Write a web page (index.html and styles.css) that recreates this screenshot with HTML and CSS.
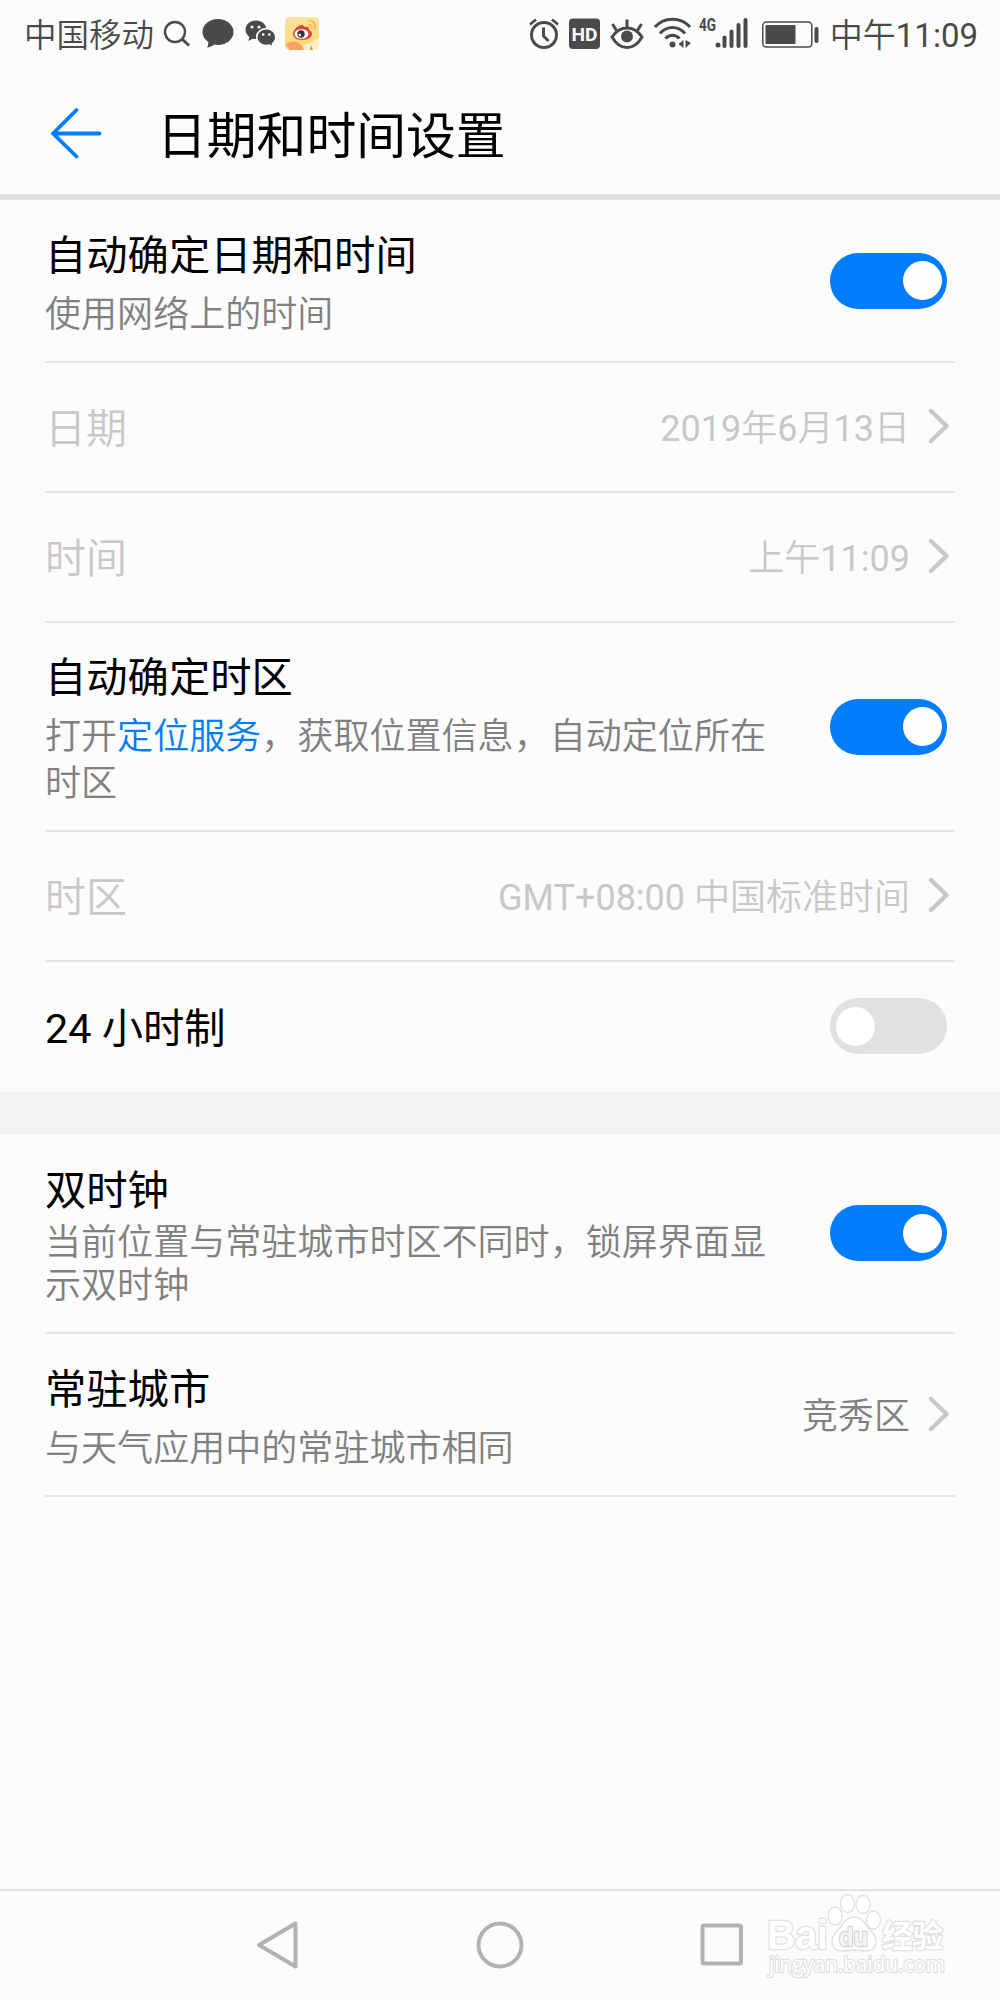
FILE: index.html
```html
<!DOCTYPE html>
<html lang="zh-CN">
<head>
    <meta charset="UTF-8">
    <title>日期和时间设置</title>
    <link rel="stylesheet" href="styles.css">
</head>
<body>
    <div class="status-bar">
        <span class="carrier">中国移动</span>
        <div class="status-left">
            <svg width="28" height="40" viewBox="0 0 28 40" fill="none" stroke="#4a4a4a" stroke-width="2.4">
                <circle cx="12" cy="18" r="10"/>
                <path d="M19 25l7 6.500" stroke-width="3"/>
            </svg>
            <svg width="32" height="40" viewBox="0 0 32 40" fill="#4a4a4a">
                <path d="M16 5C7.500 5 .5 10.500 .5 18c0 4.300 2.200 7.800 5.800 10 .2 2.200-.4 4.200-1.300 5.600 2.800-.2 5.300-1.400 7.200-3.100 1.200.3 2.500.4 3.800.4 8.600 0 15.500-5.600 15.500-12.900S24.600 5 16 5z"/>
            </svg>
            <svg width="31" height="40" viewBox="0 0 31 40">
                <path fill="#4a4a4a" d="M11 6.500C5 6.500.5 10.700.5 15.800c0 3 1.500 5.500 4 7.200L3.300 27l4.500-2.300c1.100.3 2.100.4 3.200.4 6 0 10.500-4.100 10.500-9.300S17 6.500 11 6.500z"/>
                <path fill="#4a4a4a" stroke="#fcfcfc" stroke-width="1.600" d="M21.300 14.600c-5.300 0-9.600 3.700-9.600 8.500s4.300 8.500 9.600 8.500c1.100 0 2.100-.2 3.100-.5l4 2.300-1-3.600c2.200-1.600 3.400-4 3.400-6.700 0-4.800-4.200-8.500-9.500-8.500z"/>
                <g fill="#fcfcfc">
                    <circle cx="7" cy="13" r="1.500"/>
                    <circle cx="14" cy="13" r="1.500"/>
                    <circle cx="18.200" cy="20.500" r="1.300"/>
                    <circle cx="24.300" cy="20.500" r="1.300"/>
                </g>
            </svg>
            <svg class="weibo" width="34" height="40" viewBox="0 0 34 40">
                <defs>
                    <linearGradient id="weiboBg" x1="0" y1="0" x2="0" y2="1">
                        <stop offset="0" stop-color="#fbe3a0"/>
                        <stop offset="1" stop-color="#fbd76a"/>
                    </linearGradient>
                    <clipPath id="weiboClip"><rect y="3" width="34" height="33" rx="5"/></clipPath>
                </defs>
                <g clip-path="url(#weiboClip)">
                    <rect y="3" width="34" height="33" fill="url(#weiboBg)"/>
                    <path d="M1 31c5-5 11-4 15 0l3 5H5z" fill="#f7a06a"/>
                    <path d="M18 32c5-5 9-1 11-6l5-2v12H19z" fill="#fdeec9"/>
                    <path d="M25 36l1-5 2 5z" fill="#f58a4a"/>
                </g>
                <path d="M8 20c0-4 5-9 9-9 2 0 2 1 2 2 3-1 6 0 5 3 3 1 3 3 3 4 0 3-4 6-10 6S8 23 8 20z" fill="#e0453c"/>
                <ellipse cx="16.500" cy="20" rx="7" ry="4.800" fill="#fff"/>
                <circle cx="16" cy="20" r="3.700" fill="#37343a"/>
                <circle cx="14.800" cy="21" r="1.200" fill="#fff"/>
                <path d="M23 10.500c3 0 4.500 2 4 4.500M23.500 6.500c5 0 7.500 4 6.500 9" fill="none" stroke="#f5bb5a" stroke-width="1.800"/>
            </svg>
        </div>
        <div class="status-right">
            <svg width="30" height="40" viewBox="0 0 30 40" fill="none" stroke="#4a4a4a" stroke-width="3">
                <circle cx="15" cy="21" r="12.500"/>
                <path d="M14.500 13.500V22l5 5"/>
                <path d="M1 10.500L7 5.500M23 5.500l6 5" stroke-width="2.600"/>
            </svg>
            <svg width="31" height="40" viewBox="0 0 31 40">
                <rect y="4.500" width="31" height="30.500" rx="4" fill="#4a4a4a"/>
                <text class="hd-text" x="15.500" y="26.500" text-anchor="middle" textLength="26" lengthAdjust="spacingAndGlyphs">HD</text>
            </svg>
            <svg width="34" height="40" viewBox="0 0 34 40" fill="none" stroke="#4a4a4a" stroke-width="3">
                <path d="M2 23c4-6 9-9 15-9s11 3 15 9c-4 7-9 10.500-15 10.500S6 30 2 23z"/>
                <circle cx="17" cy="22.500" r="6" fill="#4a4a4a" stroke="none"/>
                <path d="M17 5.500V14M2.500 10l4 6.500M31.500 10l-4 6.500"/>
            </svg>
            <svg width="37" height="40" viewBox="0 0 37 40" fill="none" stroke="#4a4a4a" stroke-width="3">
                <path d="M1 13c9-10.500 26-10.500 35 0M6 19.500c7-8 18-8 25 0M11.500 24.500c4-4.200 10-4.200 14 0"/>
                <circle cx="18.500" cy="30.500" r="3" fill="#4a4a4a" stroke="none"/>
                <path d="M29.500 26v8l-5-4zM31.500 26v8l5.500-5z" fill="#4a4a4a" stroke="none"/>
            </svg>
            <svg class="signal" width="50" height="40" viewBox="0 0 50 40" fill="#4a4a4a">
                <text class="net-text" x="0" y="17" textLength="17" lengthAdjust="spacingAndGlyphs">4G</text>
                <circle cx="19" cy="31" r="2.500"/>
                <rect x="23.500" y="21.500" width="4" height="12.500" rx="2"/>
                <rect x="30.500" y="15.500" width="4" height="18.500" rx="2"/>
                <rect x="37.500" y="9" width="4" height="25" rx="2"/>
                <rect x="44.500" y="4" width="4" height="30" rx="2"/>
            </svg>
            <svg width="57" height="40" viewBox="0 0 57 40">
                <rect x=".8" y="8" width="49" height="25" rx="3.500" fill="none" stroke="#4a4a4a" stroke-width="1.500"/>
                <rect x="3.500" y="11" width="30" height="19" rx="1" fill="#4a4a4a"/>
                <rect x="52.500" y="13" width="4" height="16" rx="2" fill="#4a4a4a"/>
            </svg>
            <span class="clock">中午<span class="num">11:09</span></span>
        </div>
    </div>

    <div class="header">
        <svg width="52" height="52" viewBox="0 0 52 52" fill="none" stroke="#007dff" stroke-width="3.800" stroke-linecap="round" stroke-linejoin="round">
            <path d="M26.500 3L3 26.500l23.500 23M3 26.500h46.500"/>
        </svg>
        <h1>日期和时间设置</h1>
    </div>

    <div class="row row-tall">
        <div class="row-text">
            <div class="row-title">自动确定日期和时间</div>
            <div class="row-desc">使用网络上的时间</div>
        </div>
        <div class="switch on"></div>
    </div>
    <div class="row disabled">
        <div class="row-text"><div class="row-title">日期</div></div>
        <span class="row-value"><span class="num">2019</span>年<span class="num">6</span>月<span class="num">13</span>日</span>
        <svg class="chevron" viewBox="0 0 22 36"><path d="M3 3l15.500 15L3 33"/></svg>
    </div>
    <div class="row disabled">
        <div class="row-text"><div class="row-title">时间</div></div>
        <span class="row-value">上午<span class="num">11:09</span></span>
        <svg class="chevron" viewBox="0 0 22 36"><path d="M3 3l15.500 15L3 33"/></svg>
    </div>
    <div class="row row-zone">
        <div class="row-text">
            <div class="row-title">自动确定时区</div>
            <div class="row-desc">打开<a class="link">定位服务</a>，获取位置信息，自动定位所在时区</div>
        </div>
        <div class="switch on"></div>
    </div>
    <div class="row disabled">
        <div class="row-text"><div class="row-title">时区</div></div>
        <span class="row-value"><span class="num">GMT+08:00 </span>中国标准时间</span>
        <svg class="chevron" viewBox="0 0 22 36"><path d="M3 3l15.500 15L3 33"/></svg>
    </div>
    <div class="row last">
        <div class="row-text"><div class="row-title">24 小时制</div></div>
        <div class="switch"></div>
    </div>

    <div class="section-gap"></div>

    <div class="row row-dual">
        <div class="row-text">
            <div class="row-title">双时钟</div>
            <div class="row-desc">当前位置与常驻城市时区不同时，锁屏界面显示双时钟</div>
        </div>
        <div class="switch on"></div>
    </div>
    <div class="row row-city">
        <div class="row-text">
            <div class="row-title">常驻城市</div>
            <div class="row-desc">与天气应用中的常驻城市相同</div>
        </div>
        <span class="row-value">竞秀区</span>
        <svg class="chevron" viewBox="0 0 22 36"><path d="M3 3l15.500 15L3 33"/></svg>
    </div>

    <div class="nav-bar">
        <svg width="48" height="50" viewBox="0 0 48 50"><path d="M41.500 3.500v43L5 25z"/></svg>
        <svg width="48" height="50" viewBox="0 0 48 50"><circle cx="24" cy="25" r="21.500"/></svg>
        <svg width="48" height="50" viewBox="0 0 48 50"><rect x="4.500" y="5.500" width="38.500" height="38" rx="1.500"/></svg>

        <svg class="watermark" width="190" height="90" viewBox="0 0 190 90">
            <text class="wm-logo" x="4" y="56" textLength="61" lengthAdjust="spacingAndGlyphs">Bai</text>
            <ellipse cx="72" cy="23" rx="7" ry="9"/>
            <ellipse cx="84.500" cy="10.500" rx="7" ry="9"/>
            <ellipse cx="100" cy="11.500" rx="7" ry="9"/>
            <ellipse cx="110.500" cy="27" rx="7" ry="9"/>
            <path d="M91 24c9 0 11 8 17 14 8 8 6 20-5 20-4 0-8-1-12-1s-8 1-12 1c-11 0-13-12-5-20 6-6 8-14 17-14z"/>
            <text class="wm-du" x="76" y="53" textLength="29" lengthAdjust="spacingAndGlyphs">du</text>
            <text class="wm-cn" x="119" y="54" textLength="61" lengthAdjust="spacingAndGlyphs">经验</text>
            <text class="wm-url" x="6" y="79" textLength="176" lengthAdjust="spacingAndGlyphs">jingyan.baidu.com</text>
        </svg>
    </div>
</body>
</html>
```
FILE: styles.css
```css
*, *::before, *::after {
    box-sizing: border-box;
}

body {
    display: flex;
    flex-direction: column;
    width: 1000px;
    height: 2000px;
    margin: 0;
    background: #fcfcfc;
    color: #000;
    font-family: Roboto, "Noto Sans CJK SC", sans-serif;
    overflow: hidden;
}
svg {
    display: block;
    flex: none;
}
.num {
    font-weight: 400;
}

/* status bar */
.status-bar {
    display: flex;
    align-items: center;
    height: 68px;
    padding: 0 22px 0 24px;
    color: #4a4a4a;
    font-size: 33px;
    font-weight: 350;
    line-height: 40px;
}
.carrier {
    font-size: 32.5px;
    padding-top: 4px;
}
.status-left {
    display: flex;
    margin-left: 9px;
}
.status-left svg + svg {
    margin-left: 11px;
}
.status-left svg + .weibo {
    margin-left: 9px;
}
.status-right {
    display: flex;
    align-items: center;
    margin-left: auto;
}
.status-right svg {
    margin-right: 10px;
}
.status-right .signal {
    margin-left: -2px;
    margin-right: 13px;
}
.clock {
    padding-top: 3px;
    margin-left: 1px;
}
.hd-text {
    fill: #fcfcfc;
    font-size: 19px;
    font-weight: 700;
}
.net-text {
    font-size: 18px;
    font-weight: 700;
}

/* title bar */
.header {
    display: flex;
    align-items: center;
    height: 132px;
    padding: 4px 0 0 50px;
    border-bottom: 6px solid #e2e2e2;
}
.header h1 {
    margin: 0 0 0 55px;
    padding-top: 8px;
    font-size: 49.8px;
    font-weight: 400;
    line-height: 60px;
}

/* settings list */
.row {
    display: flex;
    align-items: center;
    height: 130px;
    margin: 0 45px;
    border-bottom: 2px solid #e6e6e6;
}
.row-tall {
    height: 163px;
}
.row-zone {
    height: 209px;
}
.row-dual {
    height: 200px;
}
.row-city {
    height: 163px;
}
.last {
    border-bottom: none;
}
.row-text {
    flex: 1;
    padding-top: 4px;
}
.row-tall .row-text,
.row-zone .row-text,
.row-dual .row-text,
.row-city .row-text {
    padding-top: 9px;
}
.row-title {
    font-size: 41.3px;
    line-height: 48px;
}
.row-desc {
    width: 730px;
    margin-top: 12px;
    color: #808080;
    font-size: 36.05px;
    font-weight: 350;
    line-height: 47px;
}
.row-dual .row-desc {
    margin-top: 7px;
    line-height: 43px;
}
.row-city .row-desc {
    width: auto;
}
.link {
    color: #007dff;
}
.row-value {
    padding-top: 4px;
    color: #808080;
    font-size: 36px;
    font-weight: 350;
    line-height: 47px;
}
.row-city .row-value {
    padding-top: 6px;
}
.disabled .row-title,
.disabled .row-value {
    color: #c8c8c8;
}
.disabled .row-title {
    font-size: 41px;
    font-weight: 350;
}
.chevron {
    width: 22px;
    height: 36px;
    margin: 0 5px 2px 18px;
    fill: none;
    stroke: #c8c8c8;
    stroke-width: 4.4;
    stroke-linecap: round;
    stroke-linejoin: round;
}
.switch {
    display: flex;
    flex: none;
    align-items: center;
    width: 117px;
    height: 56px;
    margin-right: 8px;
    padding: 0 5.5px;
    border-radius: 28px;
    background: #e1e1e1;
}
.last .switch {
    margin-bottom: 2px;
}
.switch::before {
    content: "";
    width: 39px;
    height: 39px;
    border-radius: 50%;
    background: #fff;
}
.switch.on {
    justify-content: flex-end;
    background: #007dff;
}
.section-gap {
    height: 42px;
    background: #f3f3f3;
}

/* bottom navigation */
.nav-bar {
    position: relative;
    display: flex;
    align-items: center;
    justify-content: center;
    gap: 174px;
    height: 111px;
    margin-top: auto;
    padding-bottom: 2px;
    border-top: 2px solid #e2e2e2;
}
.nav-bar svg {
    fill: none;
    stroke: #b2b2b2;
    stroke-width: 4;
    stroke-linejoin: round;
}
.nav-bar .watermark {
    position: absolute;
    left: 763px;
    top: 2px;
    fill: #fff;
    stroke: #e0e0e0;
    stroke-width: 1.3;
}
.watermark text {
    paint-order: stroke;
    stroke-width: 2.4;
}
.wm-logo {
    font-family: "Liberation Sans", sans-serif;
    font-size: 40px;
    font-weight: 700;
}
.watermark .wm-du {
    fill: #f4f4f4;
    stroke: #d4d4d4;
    font-family: "Liberation Sans", sans-serif;
    font-size: 26px;
    font-weight: 700;
}
.wm-cn {
    font-family: "Noto Sans CJK SC", sans-serif;
    font-size: 31px;
    font-weight: 700;
}
.wm-url {
    font-family: "Open Sans", sans-serif;
    font-size: 21px;
}
```
